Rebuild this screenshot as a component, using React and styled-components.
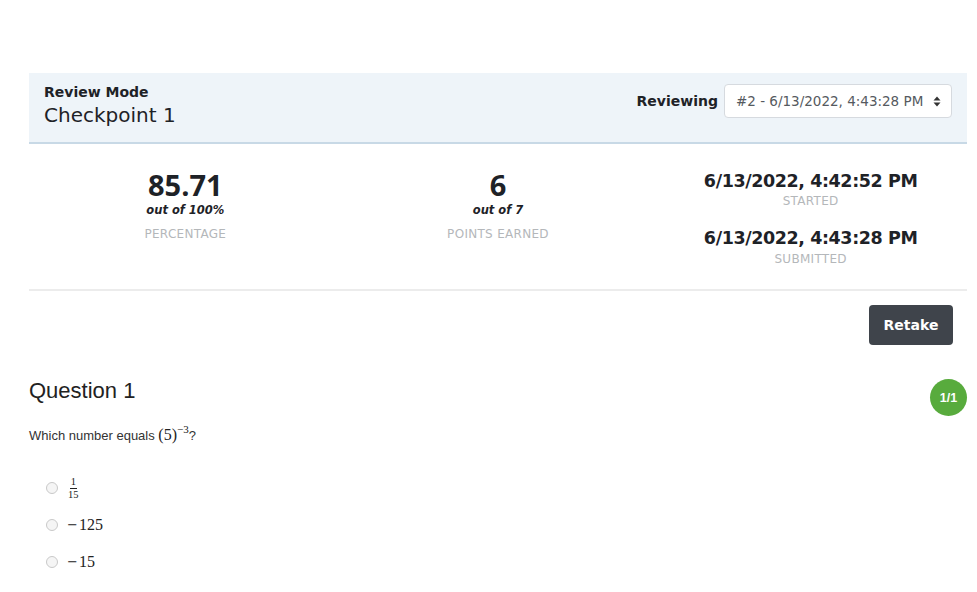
import React from "react";
import styled, { createGlobalStyle } from "styled-components";

const Global = createGlobalStyle`
  html, body { margin: 0; padding: 0; background: #fff; }
  body { font-family: "DejaVu Sans", sans-serif; color: #212529; }
  * { box-sizing: border-box; }
`;

const Page = styled.div`
  padding: 73px 10px 0 29px;
  width: 977px;
`;

const Header = styled.div`
  height: 71px;
  background: #eef4f9;
  border-bottom: 2px solid #c8d9e6;
  display: flex;
  justify-content: space-between;
  align-items: flex-start;
  padding: 11px 15px 0 15px;
`;

const TitleBlock = styled.div`
  display: flex;
  flex-direction: column;
`;

const ModeLabel = styled.div`
  font-size: 14px;
  font-weight: 700;
  line-height: 17px;
  color: #1e2227;
`;

const Title = styled.div`
  font-size: 20px;
  line-height: 28px;
  color: #1e2227;
`;

const Reviewing = styled.div`
  display: flex;
  align-items: center;
  gap: 6px;
`;

const ReviewLabel = styled.span`
  font-size: 14px;
  font-weight: 700;
  color: #1e2227;
`;

const Select = styled.div`
  width: 228px;
  height: 34px;
  border: 1px solid #d6dadf;
  border-radius: 4px;
  background: #fff;
  display: flex;
  align-items: center;
  justify-content: space-between;
  padding: 0 10px 0 11px;
  font-size: 13.5px;
  color: #555a60;
`;

const Stats = styled.div`
  display: grid;
  grid-template-columns: repeat(3, 1fr);
  padding: 26px 0 0;
  height: 147px;
  border-bottom: 2px solid #ececec;
`;

const StatCol = styled.div`
  display: flex;
  flex-direction: column;
  align-items: center;
`;

const BigNumber = styled.div`
  font-family: "Open Sans", sans-serif;
  font-size: 29px;
  font-weight: 700;
  line-height: 30px;
  color: #1e2227;
`;

const OutOf = styled.div`
  font-size: 11.5px;
  font-style: italic;
  font-weight: 700;
  line-height: 14px;
  margin-top: 3px;
  color: #1e2227;
`;

const Caption = styled.div`
  font-size: 12px;
  color: #b4b7ba;
  letter-spacing: 0.3px;
  line-height: 14px;
  margin-top: ${(p) => p.$mt || 0}px;
`;

const DateText = styled.div`
  font-size: 17.5px;
  font-weight: 700;
  letter-spacing: -0.4px;
  line-height: 22px;
  color: #1e2227;
  margin-top: ${(p) => p.$mt || 0}px;
`;

const Actions = styled.div`
  display: flex;
  justify-content: flex-end;
  padding: 14px 14px 0 0;
`;

const RetakeButton = styled.button`
  width: 84px;
  height: 40px;
  background: #3f444b;
  border: none;
  border-radius: 4px;
  color: #fff;
  font-family: "DejaVu Sans", sans-serif;
  font-weight: 700;
  font-size: 14px;
`;

const QuestionHead = styled.div`
  display: flex;
  justify-content: space-between;
  align-items: flex-start;
  margin-top: 33px;
`;

const QuestionTitle = styled.h2`
  margin: 0;
  font-family: "Liberation Sans", Arial, sans-serif;
  font-weight: 400;
  font-size: 22px;
  line-height: 26px;
  color: #222;
`;

const ScoreBadge = styled.div`
  width: 37px;
  height: 37px;
  border-radius: 50%;
  background: #58ab3d;
  color: #fff;
  font-family: "Liberation Sans", Arial, sans-serif;
  font-weight: 700;
  font-size: 12.5px;
  display: flex;
  align-items: center;
  justify-content: center;
  margin-top: 1px;
`;

const Prompt = styled.div`
  font-family: "Liberation Sans", Arial, sans-serif;
  font-size: 13px;
  color: #333;
  margin-top: 10px;
  display: flex;
  align-items: baseline;
`;

const MathText = styled.span`
  font-family: "Liberation Serif", "DejaVu Serif", serif;
  font-size: 16px;
  color: #222;
`;

const Minus = styled.span`
  font-family: "DejaVu Serif", serif;
  font-size: 13px;
  margin-right: 1px;
  vertical-align: 1px;
`;

const Sup = styled.sup`
  font-size: 11px;
  vertical-align: 7px;
  line-height: 0;
`;

const Options = styled.div`
  display: flex;
  flex-direction: column;
  gap: 15px;
  margin-top: 33px;
  padding-left: 17px;
`;

const Option = styled.label`
  display: flex;
  align-items: center;
  gap: 9px;
  height: 22px;
`;

const Radio = styled.span`
  width: 12px;
  height: 12px;
  border-radius: 50%;
  border: 1px solid #c9c9c9;
  background: #f5f5f5;
`;

const Frac = styled.span`
  display: inline-flex;
  flex-direction: column;
  align-items: center;
  font-family: "Liberation Serif", "DejaVu Serif", serif;
  font-size: 10.5px;
  line-height: 10px;
  color: #222;
  margin-left: 1px;
`;

const Num = styled.span`
  border-bottom: 1px solid #222;
  padding: 0 1px 1px;
`;

const Den = styled.span`
  padding-top: 1px;
`;

const SortIcon = () => (
  <svg width="8" height="11" viewBox="0 0 8 11">
    <path d="M4 0.5 L7.5 4.5 L0.5 4.5 Z" fill="#333" />
    <path d="M4 10.5 L7.5 6.5 L0.5 6.5 Z" fill="#333" />
  </svg>
);

export default function App() {
  return (
    <>
      <Global />
      <Page>
        <Header>
          <TitleBlock>
            <ModeLabel>Review Mode</ModeLabel>
            <Title>Checkpoint 1</Title>
          </TitleBlock>
          <Reviewing>
            <ReviewLabel>Reviewing</ReviewLabel>
            <Select>
              <span>#2 - 6/13/2022, 4:43:28 PM</span>
              <SortIcon />
            </Select>
          </Reviewing>
        </Header>

        <Stats>
          <StatCol>
            <BigNumber>85.71</BigNumber>
            <OutOf>out of 100%</OutOf>
            <Caption $mt={10}>PERCENTAGE</Caption>
          </StatCol>
          <StatCol>
            <BigNumber>6</BigNumber>
            <OutOf>out of 7</OutOf>
            <Caption $mt={10}>POINTS EARNED</Caption>
          </StatCol>
          <StatCol>
            <DateText>6/13/2022, 4:42:52 PM</DateText>
            <Caption $mt={2}>STARTED</Caption>
            <DateText $mt={19}>6/13/2022, 4:43:28 PM</DateText>
            <Caption $mt={3}>SUBMITTED</Caption>
          </StatCol>
        </Stats>

        <Actions>
          <RetakeButton>Retake</RetakeButton>
        </Actions>

        <QuestionHead>
          <QuestionTitle>Question 1</QuestionTitle>
          <ScoreBadge>1/1</ScoreBadge>
        </QuestionHead>

        <Prompt>
          Which number equals&nbsp;
          <MathText>
            (5)<Sup>−3</Sup>
          </MathText>
          ?
        </Prompt>

        <Options>
          <Option>
            <Radio />
            <Frac>
              <Num>1</Num>
              <Den>15</Den>
            </Frac>
          </Option>
          <Option>
            <Radio />
            <MathText>
              <Minus>−</Minus>125
            </MathText>
          </Option>
          <Option>
            <Radio />
            <MathText>
              <Minus>−</Minus>15
            </MathText>
          </Option>
        </Options>
      </Page>
    </>
  );
}
